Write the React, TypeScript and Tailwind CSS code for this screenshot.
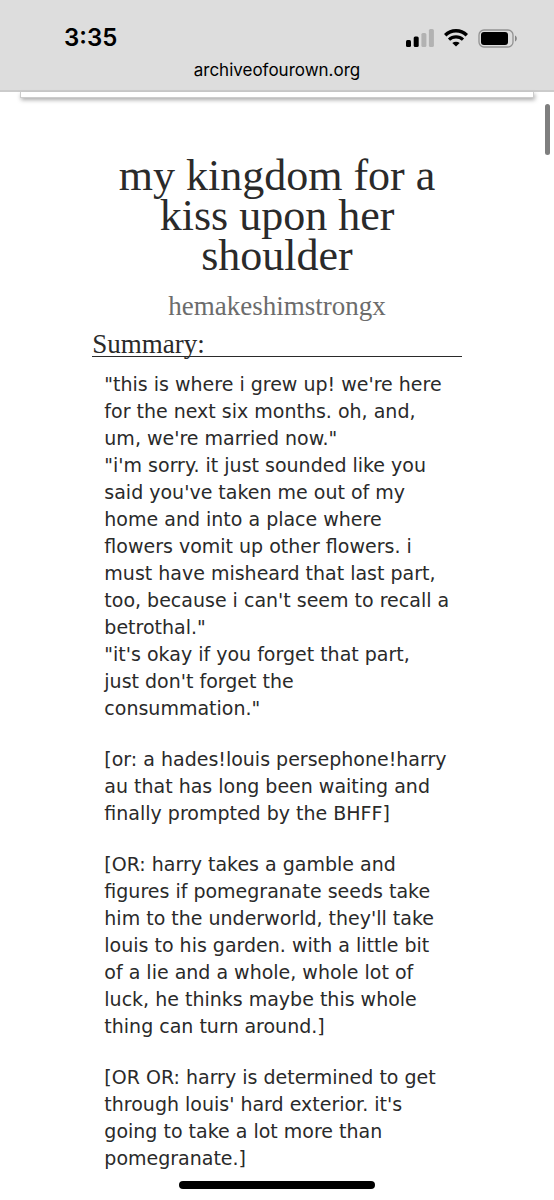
function StatusIcons() {
  return (
    <div className="flex items-center gap-2.5">
      {/* Signal */}
      <svg width="28" height="18" viewBox="0 0 28 18" aria-label="Signal">
        <rect x="0" y="11" width="5" height="7" rx="1.5" fill="#000" />
        <rect x="7.7" y="7.5" width="5" height="10.5" rx="1.5" fill="#000" />
        <rect x="15.4" y="4" width="5" height="14" rx="1.5" fill="#b2b2b2" />
        <rect x="22.9" y="0" width="5" height="18" rx="1.5" fill="#b2b2b2" />
      </svg>
      {/* Wi-Fi */}
      <svg width="24" height="18" viewBox="0 0 24 18" fill="none" aria-label="Wi-Fi">
        <path d="M1.2 6.2C7.3 .4 16.7 .4 22.8 6.2" stroke="#000" strokeWidth="3.5" />
        <path d="M5 10.6C9 6.9 15 6.9 19 10.6" stroke="#000" strokeWidth="3.2" />
        <path d="M12 17.6L8.3 13.9C10.4 12.2 13.6 12.2 15.7 13.9Z" fill="#000" />
      </svg>
      {/* Battery */}
      <svg width="40" height="19" viewBox="0 0 40 19" aria-label="Battery">
        <rect x="1" y="1" width="34" height="17" rx="5" fill="none" stroke="#929292" strokeWidth="1.3" />
        <rect x="3" y="3" width="27" height="13" rx="3" fill="#000" />
        <path d="M37 6.5c2.4 1 2.4 5 0 6z" fill="#858585" />
      </svg>
    </div>
  )
}

export default function App() {
  return (
    <div className="relative min-h-screen bg-white text-[#2a2a2a]">
      {/* Browser header */}
      <header className="border-b-2 border-[#cbcbcb] bg-[#dddddd] font-['Inter',sans-serif] text-black">
        <div className="flex h-14 items-center justify-between pt-5 pr-9 pl-16">
          <time className="text-2xl font-semibold">3:35</time>
          <StatusIcons />
        </div>
        <p className="h-8.5 pt-0.5 text-center text-[17px] leading-6">archiveofourown.org</p>
      </header>

      {/* Bottom edge of the panel above */}
      <div className="mx-5 h-1.5 border-x border-b border-[#cccccc] bg-white shadow-[1px_2px_4px_#aaaaaa]" />

      <main className="mx-auto w-2/3 pt-[58px]">
        <div className="text-center font-['Liberation_Serif',serif]">
          <h1 className="text-[44px] leading-10">my kingdom for a kiss upon her shoulder</h1>
          <h2 className="mt-3 text-[27px] leading-9">
            <a href="#author" className="text-[#6c6c6c]">hemakeshimstrongx</a>
          </h2>
        </div>

        <section>
          <h3 className="mt-2 border-b border-[#2a2a2a] font-['Liberation_Serif',serif] text-[27px] leading-6">
            Summary:
          </h3>
          <blockquote className="space-y-6 px-3 pt-3.5 pb-7 font-['DejaVu_Sans',sans-serif] text-[19px] leading-[27px]">
            <p>
              "this is where i grew up! we're here for the next six months. oh, and, um, we're married now."
              <br />
              "i'm sorry. it just sounded like you said you've taken me out of my home and into a place where
              flowers vomit up other flowers. i must have misheard that last part, too, because i can't seem to
              recall a betrothal."
              <br />
              "it's okay if you forget that part, just don't forget the consummation."
            </p>
            <p>
              [or: a hades!louis persephone!harry au that has long been waiting and finally prompted by the BHFF]
            </p>
            <p>
              [OR: harry takes a gamble and figures if pomegranate seeds take him to the underworld, they'll take
              louis to his garden. with a little bit of a lie and a whole, whole lot of luck, he thinks maybe this
              whole thing can turn around.]
            </p>
            <p>
              [OR OR: harry is determined to get through louis' hard exterior. it's going to take a lot more than
              pomegranate.]
            </p>
          </blockquote>
        </section>
      </main>

      {/* Scrollbar */}
      <div className="absolute top-26 right-1 h-[51px] w-[5px] rounded-full bg-[#7f7f7f]" />
      {/* Home indicator */}
      <div className="absolute top-[1181px] left-1/2 h-2 w-49 -translate-x-1/2 rounded-full bg-black" />
    </div>
  )
}
